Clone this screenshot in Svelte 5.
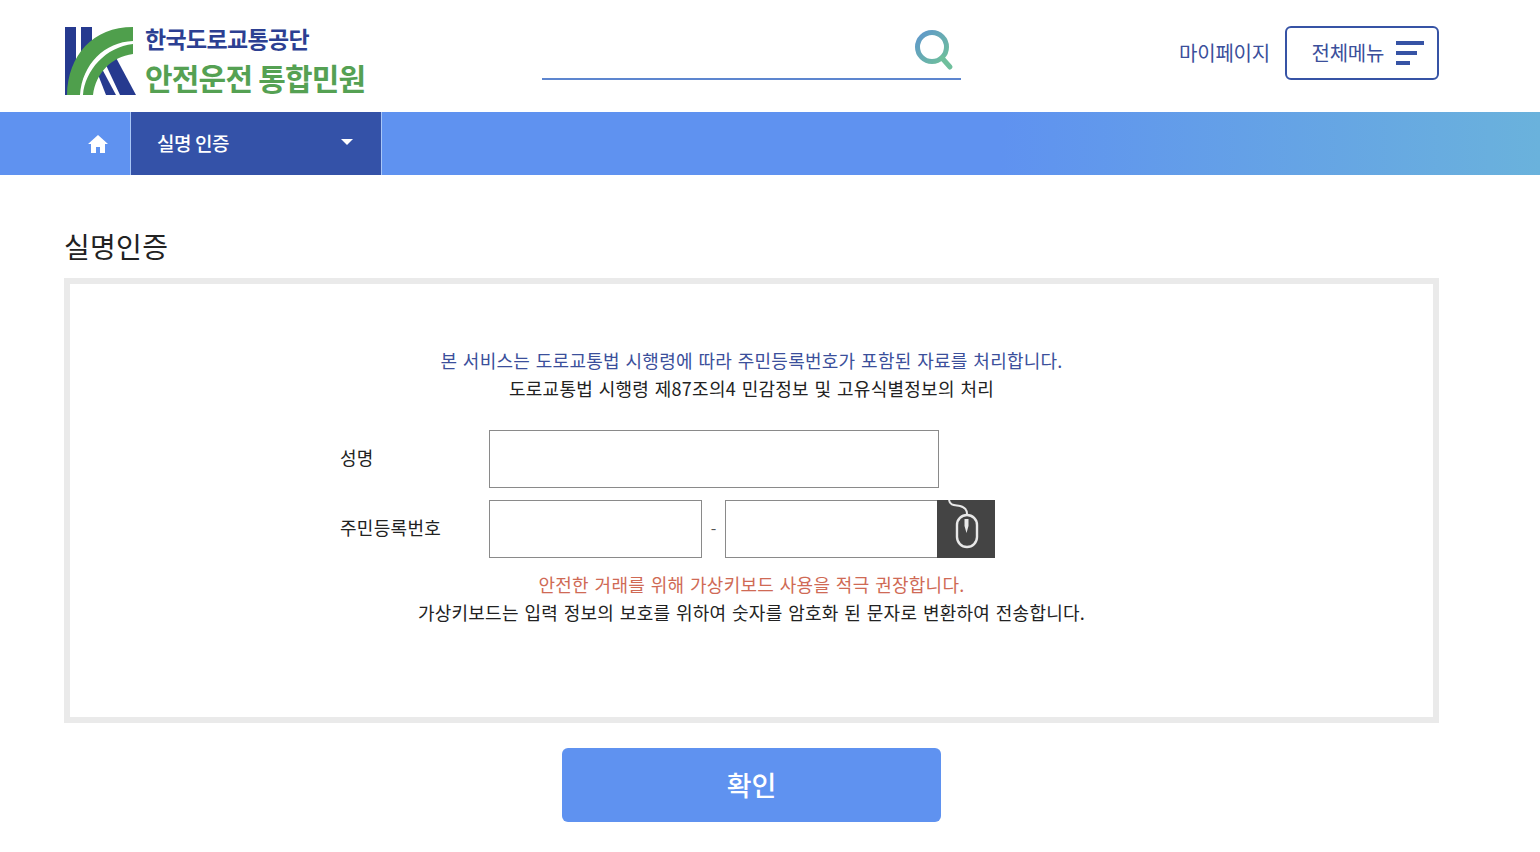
<script>
  let name = $state('');
  let juminFront = $state('');
  let juminBack = $state('');
</script>

<header class="top">
  <div class="logo">
    <svg class="mark" width="71" height="68" viewBox="0 0 71 68">
      <rect x="0" y="0" width="11" height="68" fill="#263a8f" />
      <rect x="16" y="0" width="11" height="28" fill="#263a8f" />
      <polygon points="40,36 49,27 71,68 55,68" fill="#263a8f" />
      <polygon points="32,45 36,40 51,68 41,68" fill="#263a8f" />
      <path d="M2 68 C3 28 28 0 68 0 L68 14 C40 15 17 37 15 68 Z" fill="#4f9f4c" />
      <path d="M18 68 C20 43 41 20 68 17 L68 27 C46 30 31 46 28 68 Z" fill="#4f9f4c" />
    </svg>
    <div class="logo-text">
      <span class="org">한국도로교통공단</span>
      <span class="service">안전운전 통합민원</span>
    </div>
  </div>

  <div class="search">
    <svg width="42" height="42" viewBox="0 0 42 42">
      <defs>
        <linearGradient id="searchGrad" x1="0" y1="0" x2="1" y2="1">
          <stop offset="0" stop-color="#5f97cc" />
          <stop offset="1" stop-color="#6fc09a" />
        </linearGradient>
      </defs>
      <circle cx="18" cy="17" r="14.5" fill="none" stroke="url(#searchGrad)" stroke-width="5" />
      <line x1="28" y1="28" x2="36" y2="37" stroke="#6fbf9c" stroke-width="5" stroke-linecap="round" />
    </svg>
  </div>

  <div class="util">
    <span class="mypage">마이페이지</span>
    <button class="all-menu">
      <span>전체메뉴</span>
      <span class="bars"><i class="b1"></i><i class="b2"></i><i class="b3"></i></span>
    </button>
  </div>
</header>

<nav class="nav">
  <div class="home">
    <svg width="20" height="18" viewBox="0 0 20 18">
      <path d="M10 0 L20 9 L17 9 L17 18 L12 18 L12 12 L8 12 L8 18 L3 18 L3 9 L0 9 Z" fill="#fff" />
    </svg>
  </div>
  <div class="crumb">
    <span>실명 인증</span>
    <span class="caret"></span>
  </div>
</nav>

<main class="content">
  <h1>실명인증</h1>
  <section class="box">
    <p class="notice blue">본 서비스는 도로교통법 시행령에 따라 주민등록번호가 포함된 자료를 처리합니다.</p>
    <p class="notice">도로교통법 시행령 제87조의4 민감정보 및 고유식별정보의 처리</p>

    <div class="form">
      <div class="row">
        <label for="nm">성명</label>
        <input id="nm" class="wide" type="text" bind:value={name} />
      </div>
      <div class="row">
        <label for="j1">주민등록번호</label>
        <input id="j1" class="half" type="text" bind:value={juminFront} />
        <span class="dash">-</span>
        <input class="half" type="password" aria-label="주민등록번호 뒷자리" bind:value={juminBack} />
        <button class="keypad" aria-label="가상키보드">
          <svg width="58" height="58" viewBox="0 0 58 58">
            <path d="M12 0 C13 6 18 5 23 6 C27 7 30 9 30 14" fill="none" stroke="#e8e8e8" stroke-width="2" />
            <rect x="20" y="15" width="20" height="32" rx="10" fill="none" stroke="#e8e8e8" stroke-width="2.4" />
            <path d="M27.5 19 h4 v7 l-2 7 l-2 -7 Z" fill="#e8e8e8" />
          </svg>
        </button>
      </div>
    </div>

    <p class="notice red">안전한 거래를 위해 가상키보드 사용을 적극 권장합니다.</p>
    <p class="notice">가상키보드는 입력 정보의 보호를 위하여 숫자를 암호화 된 문자로 변환하여 전송합니다.</p>
  </section>

  <div class="actions">
    <button class="confirm">확인</button>
  </div>
</main>

<style>
  :global(body) {
    margin: 0;
    background: #fff;
    font-family: "Noto Sans CJK KR", "Noto Sans", sans-serif;
    color: #222;
  }

  .top {
    height: 112px;
    box-sizing: border-box;
    padding: 0 101px 0 65px;
    display: flex;
    align-items: flex-start;
  }

  .logo {
    display: flex;
    gap: 9px;
    padding-top: 22px;
    width: 477px;
  }

  .mark {
    margin-top: 5px;
  }

  .logo-text {
    display: flex;
    flex-direction: column;
    font-weight: 700;
    line-height: 1;
    white-space: nowrap;
  }

  .org {
    color: #2c3f92;
    font-size: 23px;
    letter-spacing: -0.65px;
    height: 38px;
    line-height: 33px;
  }

  .service {
    color: #55a153;
    font-size: 30px;
    letter-spacing: -0.8px;
    line-height: 34px;
  }

  .search {
    width: 419px;
    height: 80px;
    box-sizing: border-box;
    padding: 30px 0 0 372px;
    border-bottom: 2px solid #5d86cf;
  }

  .util {
    margin-left: auto;
    display: flex;
    align-items: center;
    gap: 15px;
    padding-top: 26px;
  }

  .mypage {
    font-size: 20px;
    letter-spacing: -0.2px;
    color: #3b4f9b;
    padding-bottom: 2px;
  }

  .all-menu {
    width: 154px;
    height: 54px;
    box-sizing: border-box;
    border: 2px solid #3653a5;
    border-radius: 6px;
    background: #fff;
    color: #3b4f9b;
    font: inherit;
    font-size: 20px;
    letter-spacing: -0.3px;
    display: flex;
    align-items: center;
    justify-content: flex-end;
    gap: 12px;
    padding: 0 13px 2px 0;
  }

  .bars {
    display: flex;
    flex-direction: column;
    gap: 6px;
    width: 28px;
    padding-top: 2px;
  }

  .bars i {
    display: block;
    height: 4px;
    background: #3653a5;
  }

  .b1 { width: 28px; }
  .b2 { width: 21px; }
  .b3 { width: 14px; }

  .nav {
    height: 63px;
    display: flex;
    background: linear-gradient(90deg, #5f92f0 0%, #5f92f0 65%, #6ab2dc 100%);
  }

  .home {
    width: 131px;
    padding-left: 65px;
    box-sizing: border-box;
    display: flex;
    align-items: center;
    justify-content: center;
    border-right: 1px solid #a9c6f6;
  }

  .crumb {
    width: 251px;
    box-sizing: border-box;
    background: #3452a8;
    border-right: 1px solid #a9c6f6;
    color: #fff;
    font-size: 19px;
    font-weight: 500;
    letter-spacing: -0.4px;
    display: flex;
    align-items: center;
    justify-content: space-between;
    padding: 0 28px 2px 26px;
  }

  .caret {
    width: 0;
    height: 0;
    border-left: 6px solid transparent;
    border-right: 6px solid transparent;
    border-top: 6px solid #fff;
    margin-bottom: 2px;
  }

  .content {
    padding: 0 101px 0 64px;
  }

  h1 {
    margin: 0;
    padding-top: 51px;
    height: 52px;
    font-size: 28px;
    font-weight: 400;
    line-height: 40px;
    color: #222;
    letter-spacing: 0.3px;
  }

  .box {
    box-sizing: border-box;
    height: 445px;
    border: 6px solid #eaeaea;
    padding-top: 62px;
  }

  .notice {
    margin: 0;
    text-align: center;
    font-size: 18px;
    line-height: 28px;
    letter-spacing: 0.25px;
    word-spacing: 1.4px;
    color: #222;
  }

  .blue { color: #3b4f9b; }
  .red { color: #cf6a55; }

  .form {
    margin: 28px 0 12px 270px;
    display: flex;
    flex-direction: column;
    gap: 12px;
  }

  .row {
    display: flex;
    align-items: center;
    height: 58px;
  }

  label {
    width: 149px;
    font-size: 18px;
    letter-spacing: 0.3px;
    color: #222;
    padding-bottom: 4px;
  }

  input {
    box-sizing: border-box;
    height: 58px;
    border: 1px solid #8a8a8a;
    background: #fff;
    padding: 0 10px;
    outline: none;
    font: inherit;
  }

  .wide { width: 450px; }
  .half { width: 213px; }

  .dash {
    width: 23px;
    text-align: center;
    font-size: 16px;
    color: #555;
    padding-bottom: 4px;
  }

  .keypad {
    width: 58px;
    height: 58px;
    padding: 0;
    border: 0;
    background: #444;
    display: block;
    margin-left: -1px;
  }

  .keypad svg {
    display: block;
  }

  .actions {
    display: flex;
    justify-content: center;
    margin-top: 25px;
  }

  .confirm {
    width: 379px;
    height: 74px;
    border: 0;
    border-radius: 6px;
    background: #5f92f0;
    color: #fff;
    font: inherit;
    font-size: 27px;
    font-weight: 500;
    padding: 0 0 1px;
  }
</style>
